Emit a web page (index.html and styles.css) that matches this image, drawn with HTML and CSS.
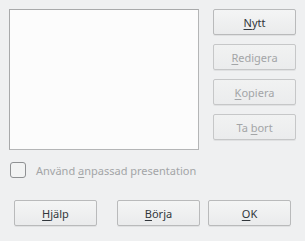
FILE: index.html
```html
<!DOCTYPE html>
<html lang="sv">
<head>
    <meta charset="UTF-8">
    <title>Anpassad presentation</title>
    <link rel="stylesheet" href="styles.css">
</head>
<body>
    <div class="dialog">
        <div class="top-row">
            <div class="list-box"></div>
            <div class="side-buttons">
                <button class="btn"><u>N</u>ytt</button>
                <button class="btn" disabled><u>R</u>edigera</button>
                <button class="btn" disabled><u>K</u>opiera</button>
                <button class="btn" disabled>Ta <u>b</u>ort</button>
            </div>
        </div>
        <label class="check-row">
            <span class="check-box"></span>
            <span class="check-label">Använd <u>a</u>npassad presentation</span>
        </label>
        <div class="bottom-row">
            <button class="btn"><u>H</u>jälp</button>
            <div class="right-group">
                <button class="btn"><u>B</u>örja</button>
                <button class="btn"><u>O</u>K</button>
            </div>
        </div>
    </div>
</body>
</html>
```

FILE: styles.css
```css
/* General Reset */
* {
    margin: 0;
    padding: 0;
    box-sizing: border-box;
}

body, html {
    height: 100%;
    font-family: 'Noto Sans', 'Open Sans', sans-serif;
    font-size: 11px;
    background-color: #eff0f1;
    color: #31363b;
}

.dialog {
    display: flex;
    flex-direction: column;
    padding: 9px 9px 0 9px;
}

.top-row {
    display: flex;
    gap: 14px;
}

.list-box {
    width: 190px;
    height: 141px;
    background-color: #fcfcfc;
    border: 1px solid #b4b5b6;
    border-top-color: #a8a9aa;
    border-left-color: #a8a9aa;
}

.side-buttons {
    display: flex;
    flex-direction: column;
    gap: 9px;
}

.btn {
    width: 83px;
    height: 26px;
    font-family: inherit;
    font-size: 11px;
    color: #31363b;
    background: linear-gradient(#f4f5f5, #eaebec);
    border: 1px solid #b9babb;
    border-radius: 2px;
    box-shadow: 0 1px 0 rgba(0, 0, 0, 0.06);
}

.btn u {
    text-underline-offset: 2px;
}

.btn:disabled {
    color: #a3a5a7;
    background: linear-gradient(#f1f2f2, #ebeced);
    border-color: #c6c7c8;
}

/* Checkbox */
.check-row {
    display: flex;
    align-items: center;
    gap: 10px;
    margin: 11px 0 0 1px;
    height: 18px;
}

.check-box {
    width: 16px;
    height: 16px;
    border: 1px solid #8f9193;
    border-radius: 3px;
    background-color: #f2f3f3;
}

.check-label {
    color: #a3a5a7;
}

.check-label u {
    text-underline-offset: 2px;
}

/* Bottom buttons */
.bottom-row {
    display: flex;
    justify-content: space-between;
    margin-top: 21px;
    padding: 0 5px 0 5px;
}

.right-group {
    display: flex;
    gap: 8px;
}
```
